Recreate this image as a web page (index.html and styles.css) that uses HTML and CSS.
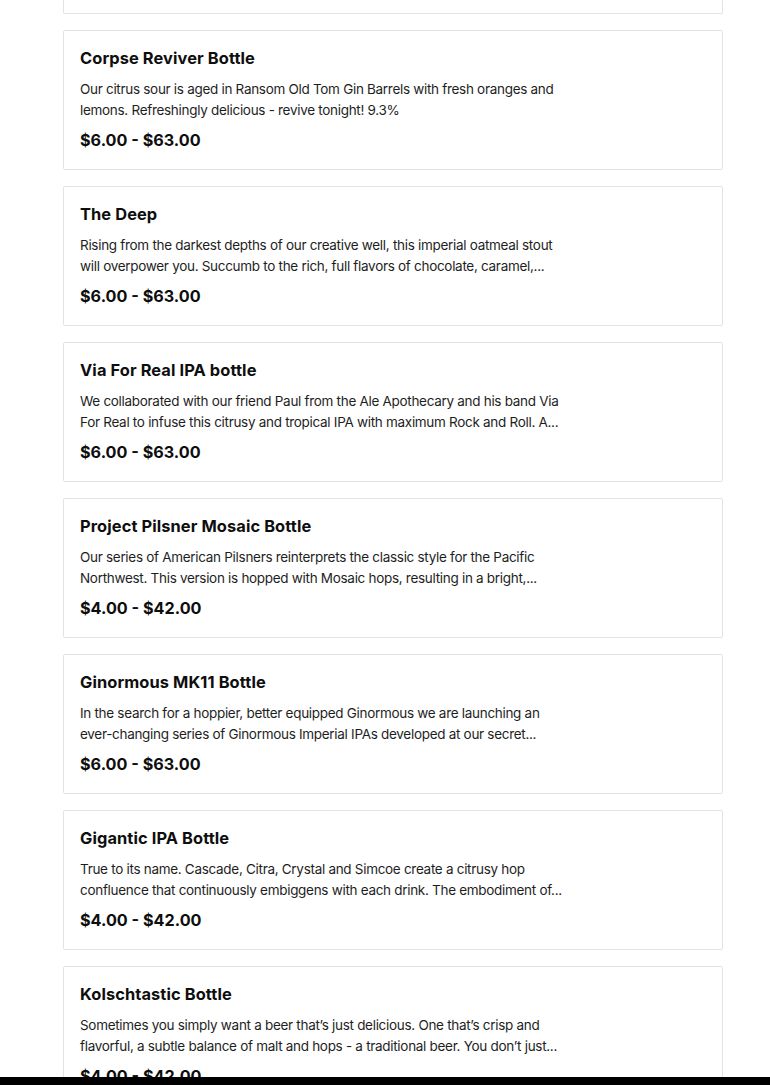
FILE: index.html
```html
<!DOCTYPE html>
<html lang="en">
<head>
<meta charset="utf-8">
<link rel="stylesheet" href="styles.css">
</head>
<body>
<main class="list">
  <div class="card card-cut"></div>

  <article class="card">
    <h3 class="title">Corpse Reviver Bottle</h3>
    <p class="desc"><span class="line">Our citrus sour is aged in Ransom Old Tom Gin Barrels with fresh oranges and</span><span class="line">lemons. Refreshingly delicious - revive tonight! 9.3%</span></p>
    <div class="price">$6.00 - $63.00</div>
  </article>

  <article class="card">
    <h3 class="title">The Deep</h3>
    <p class="desc"><span class="line">Rising from the darkest depths of our creative well, this imperial oatmeal stout</span><span class="line">will overpower you. Succumb to the rich, full flavors of chocolate, caramel,...</span></p>
    <div class="price">$6.00 - $63.00</div>
  </article>

  <article class="card">
    <h3 class="title">Via For Real IPA bottle</h3>
    <p class="desc"><span class="line">We collaborated with our friend Paul from the Ale Apothecary and his band Via</span><span class="line">For Real to infuse this citrusy and tropical IPA with maximum Rock and Roll. A...</span></p>
    <div class="price">$6.00 - $63.00</div>
  </article>

  <article class="card">
    <h3 class="title">Project Pilsner Mosaic Bottle</h3>
    <p class="desc"><span class="line">Our series of American Pilsners reinterprets the classic style for the Pacific</span><span class="line">Northwest. This version is hopped with Mosaic hops, resulting in a bright,...</span></p>
    <div class="price">$4.00 - $42.00</div>
  </article>

  <article class="card">
    <h3 class="title">Ginormous MK11 Bottle</h3>
    <p class="desc"><span class="line">In the search for a hoppier, better equipped Ginormous we are launching an</span><span class="line">ever-changing series of Ginormous Imperial IPAs developed at our secret...</span></p>
    <div class="price">$6.00 - $63.00</div>
  </article>

  <article class="card">
    <h3 class="title">Gigantic IPA Bottle</h3>
    <p class="desc"><span class="line">True to its name. Cascade, Citra, Crystal and Simcoe create a citrusy hop</span><span class="line">confluence that continuously embiggens with each drink. The embodiment of...</span></p>
    <div class="price">$4.00 - $42.00</div>
  </article>

  <article class="card">
    <h3 class="title">Kolschtastic Bottle</h3>
    <p class="desc"><span class="line">Sometimes you simply want a beer that’s just delicious. One that’s crisp and</span><span class="line">flavorful, a subtle balance of malt and hops - a traditional beer. You don’t just...</span></p>
    <div class="price">$4.00 - $42.00</div>
  </article>
</main>
<div class="bottom-bar"></div>
</body>
</html>
```

FILE: styles.css
```css
html, body {
  margin: 0;
  padding: 0;
  background: #ffffff;
  overflow: hidden;
  scrollbar-width: none;
}

body {
  height: 100vh;
  font-family: Inter, "Noto Sans", "Liberation Sans", sans-serif;
  color: #111111;
}

.list {
  display: flex;
  flex-direction: column;
  gap: 16px;
  width: 660px;
  margin-left: 63px;
}

.card {
  border: 1px solid #e3e3e3;
  border-radius: 2px;
  padding: 15px 16px 16px;
  box-sizing: border-box;
  height: 140px;
  display: flex;
  flex-direction: column;
  flex-shrink: 0;
}

.card-cut {
  height: 14px;
  border-top: none;
  border-radius: 0 0 2px 2px;
  padding: 0;
}

.title {
  margin: 0;
  font-size: 16.4px;
  line-height: 24px;
  font-weight: 700;
  color: #0e0e0e;
  letter-spacing: 0.1px;
}

.desc {
  margin: 9px 0 0;
  font-size: 13.5px;
  line-height: 21px;
  color: #1e1e1e;
  letter-spacing: -0.3px;
}

.line {
  display: block;
  white-space: nowrap;
}

.price {
  margin-top: 7px;
  font-size: 16.2px;
  line-height: 24px;
  font-weight: 700;
  color: #0e0e0e;
}

.bottom-bar {
  position: fixed;
  left: 0;
  right: 0;
  bottom: 0;
  height: 8px;
  background: #000000;
}
```
